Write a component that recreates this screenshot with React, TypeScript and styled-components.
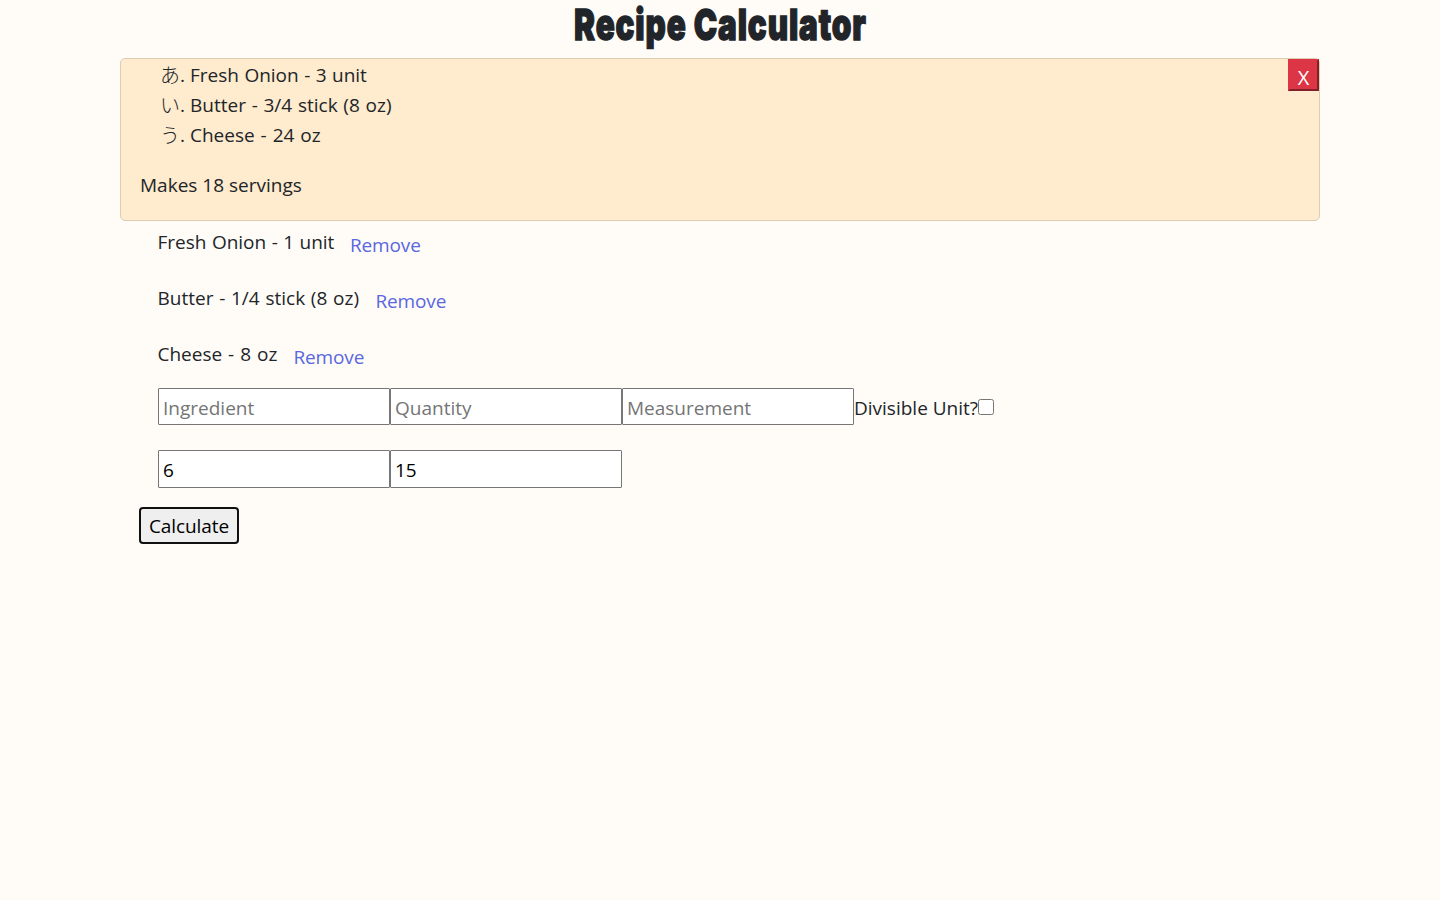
import React from "react";
import styled, { createGlobalStyle } from "styled-components";

const GlobalStyle = createGlobalStyle`
  *, *::before, *::after { box-sizing: border-box; }
  body {
    margin: 0;
    background: #fffcf7;
    color: #212529;
    font-family: "Open Sans", "Noto Sans CJK JP", sans-serif;
    font-size: 19px;
    line-height: 30px;
  }
`;

const Page = styled.main`
  width: 1200px;
  margin: 0 auto;
`;

const Header = styled.header`
  display: flex;
  justify-content: center;
  height: 58px;
`;

const Title = styled.h1`
  margin: 0;
  font-family: Inter, sans-serif;
  font-size: 43px;
  font-weight: 900;
  line-height: 48px;
  letter-spacing: 1.2px;
  white-space: nowrap;
  -webkit-text-stroke: 1.4px #212529;
  transform: scaleX(0.73);
`;

const Text = styled.span<{ $width: number; $word?: number; $letter?: number }>`
  display: inline-block;
  width: ${(p) => p.$width}px;
  word-spacing: ${(p) => p.$word ?? 0}px;
  letter-spacing: ${(p) => p.$letter ?? 0}px;
  text-align: left;
  white-space: nowrap;
`;

const ResultCard = styled.section`
  display: flex;
  justify-content: space-between;
  align-items: flex-start;
  height: 163px;
  padding-left: 19px;
  border: 1px solid #decdb3;
  border-radius: 5px;
  background: #ffebcd;
`;

const ResultBody = styled.div`
  padding-top: 1px;
`;

const ResultList = styled.ol`
  margin: 0 0 20px;
  padding: 0 0 0 20px;
  list-style: none;
`;

const ResultItem = styled.li`
  display: flex;
  height: 30px;
`;

const Marker = styled.span`
  display: flex;
  width: 30px;
`;

const Kana = styled.span`
  width: 20px;
  font-family: "Noto Sans CJK JP", sans-serif;
  font-size: 20px;
  font-weight: 300;
`;

const Servings = styled.p`
  margin: 0;
`;

const CloseButton = styled.button`
  width: 31px;
  height: 32px;
  padding: 5px 0 0;
  border: 2px solid;
  border-color: #dc3545 #84202a #84202a #dc3545;
  background: #dc3545;
  color: #fff;
  font: 20px/24px "Open Sans", sans-serif;
`;

const IngredientList = styled.ul`
  margin: 0;
  padding: 6px 0 0 37.5px;
  list-style: none;
`;

const IngredientRow = styled.li`
  display: flex;
  gap: 16px;
  height: 56px;
`;

const RemoveButton = styled.button`
  height: 30px;
  margin-top: 3px;
  padding: 0;
  border: 0;
  background: none;
  color: #5a67e0;
  font: inherit;
`;

const Fields = styled.div`
  display: flex;
  flex-direction: column;
  gap: 25px;
  margin-top: -7px;
  padding-left: 38px;
`;

const FieldRow = styled.div`
  display: flex;
  align-items: flex-start;
`;

const Field = styled.input<{ $height: number }>`
  width: 232px;
  height: ${(p) => p.$height}px;
  padding: 3px 4px ${(p) => p.$height - 37}px;
  border: 1px solid #767676;
  border-radius: 1px;
  outline: 0;
  background: #fff;
  color: #000;
  font: inherit;
  &::placeholder { color: #757575; opacity: 1; }
`;

const CheckLabel = styled.label`
  display: flex;
  padding-top: 5px;
`;

const Checkbox = styled.input`
  width: 16px;
  height: 16px;
  margin: 6px 0 0;
`;

const CalculateButton = styled.button`
  display: block;
  width: 100px;
  height: 37px;
  margin: 19px 0 0 19px;
  padding: 1px 0 0 8px;
  border: 2px solid #101010;
  border-radius: 4px;
  background: #efefef;
  color: #000;
  font: inherit;
  letter-spacing: -0.1px;
  text-align: left;
`;

const results = [
  { kana: "あ", text: "Fresh Onion - 3 unit", width: 177, word: 0.5 },
  { kana: "い", text: "Butter - 3/4 stick (8 oz)", width: 201, word: 0.8 },
  { kana: "う", text: "Cheese - 24 oz", width: 131, word: 1 },
];

const ingredients = [
  { text: "Fresh Onion - 1 unit", width: 176.5, word: 0.5 },
  { text: "Butter - 1/4 stick (8 oz)", width: 202, word: 0.8 },
  { text: "Cheese - 8 oz", width: 120, word: 1 },
];

export default function App() {
  return (
    <>
      <GlobalStyle />
      <Page>
        <Header>
          <Title>Recipe Calculator</Title>
        </Header>
        <ResultCard>
          <ResultBody>
            <ResultList>
              {results.map((r) => (
                <ResultItem key={r.kana}>
                  <Marker><Kana>{r.kana}</Kana>.</Marker>
                  <Text $width={r.width} $word={r.word}>{r.text}</Text>
                </ResultItem>
              ))}
            </ResultList>
            <Servings><Text $width={161}>Makes 18 servings</Text></Servings>
          </ResultBody>
          <CloseButton>X</CloseButton>
        </ResultCard>
        <IngredientList>
          {ingredients.map((i) => (
            <IngredientRow key={i.text}>
              <Text $width={i.width} $word={i.word}>{i.text}</Text>
              <RemoveButton><Text $width={71} $letter={-0.15}>Remove</Text></RemoveButton>
            </IngredientRow>
          ))}
        </IngredientList>
        <Fields>
          <FieldRow>
            <Field $height={37} placeholder="Ingredient" />
            <Field $height={37} placeholder="Quantity" />
            <Field $height={37} placeholder="Measurement" />
            <CheckLabel>
              <Text $width={124}>Divisible Unit?</Text>
              <Checkbox type="checkbox" />
            </CheckLabel>
          </FieldRow>
          <FieldRow>
            <Field $height={38} defaultValue="6" />
            <Field $height={38} defaultValue="15" />
          </FieldRow>
        </Fields>
        <CalculateButton>Calculate</CalculateButton>
      </Page>
    </>
  );
}
